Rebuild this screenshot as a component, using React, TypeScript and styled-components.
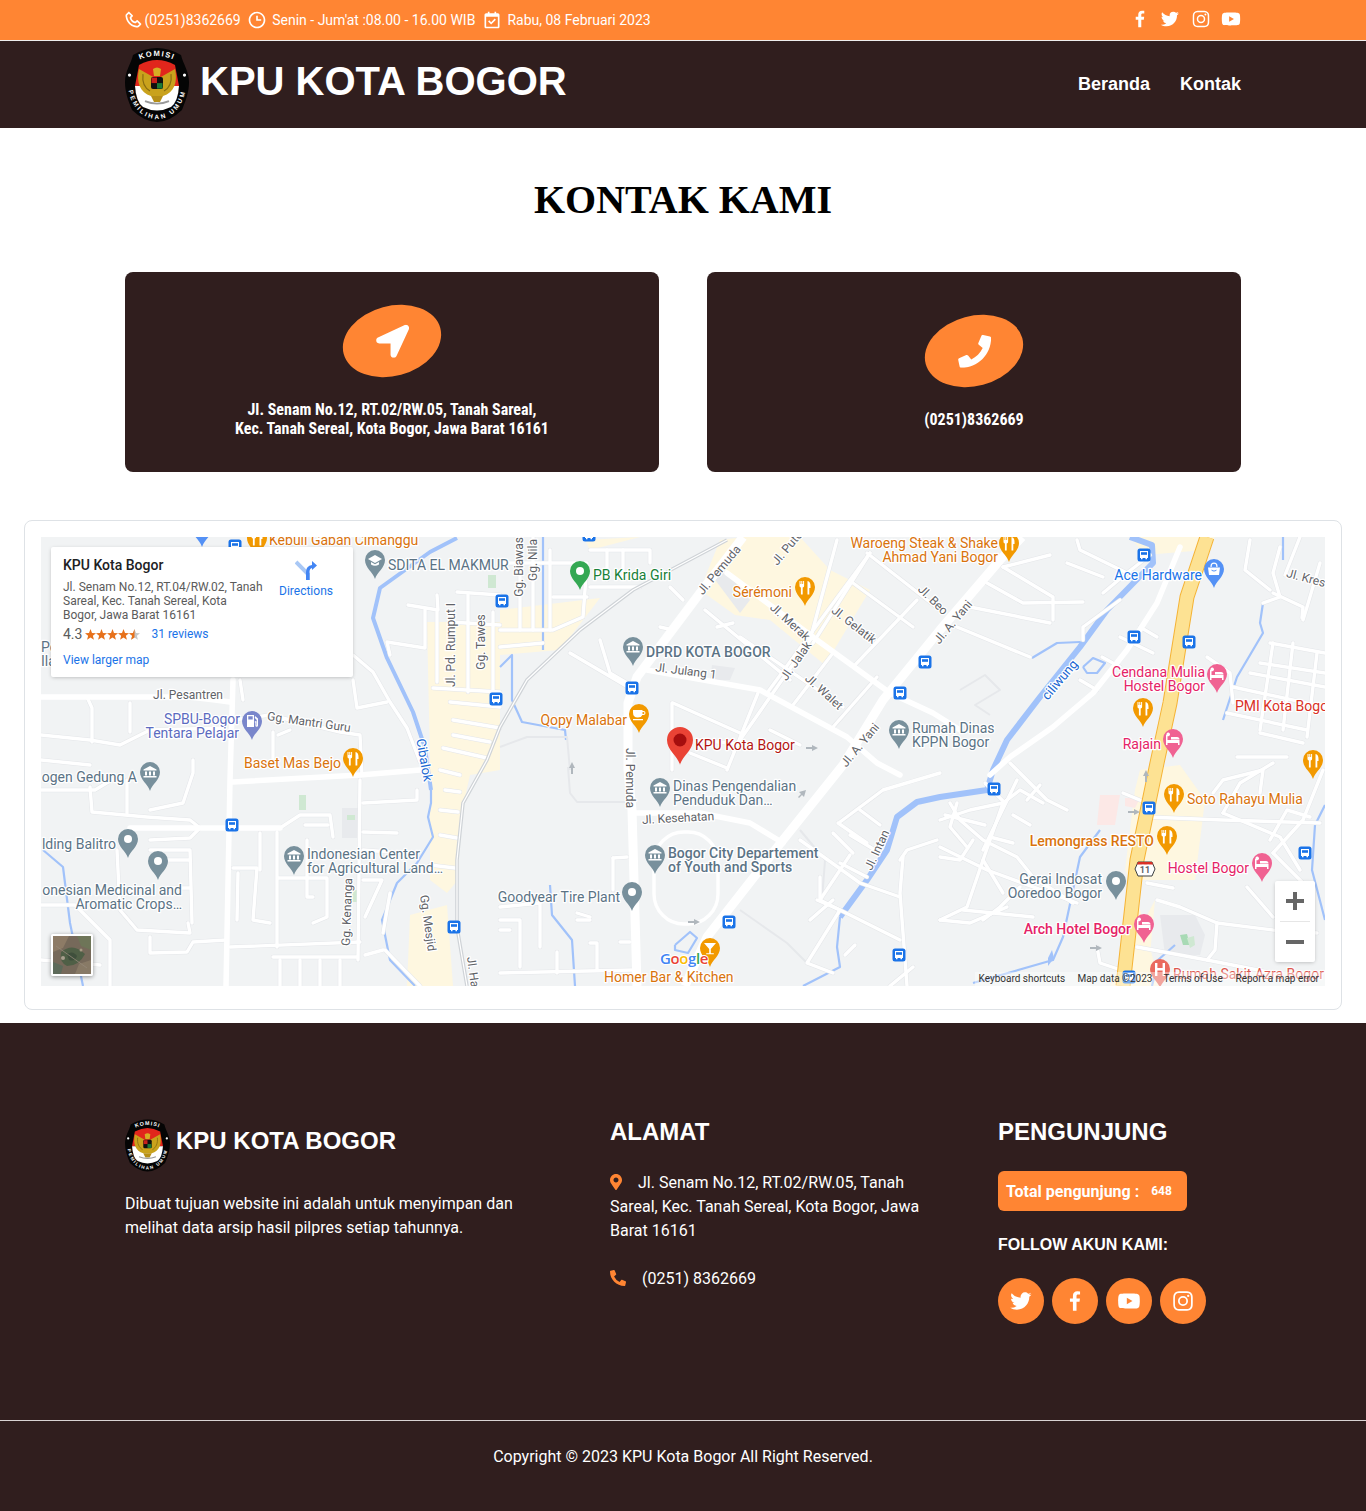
import React from "react";
import styled, { createGlobalStyle } from "styled-components";
import {
  BiPhone, BiTime, BiCalendarCheck, BiLogoFacebook, BiLogoTwitter, BiLogoInstagram, BiLogoYoutube,
} from "react-icons/bi";
import { FaLocationArrow, FaPhone, FaMapMarkerAlt, FaPhoneAlt } from "react-icons/fa";

const ORANGE = "#ff8533";
const DARK = "#301e1e";

const Global = createGlobalStyle`
  html, body { margin: 0; padding: 0; background: #fff; }
  body { font-family: Roboto, "Liberation Sans", Arial, sans-serif; font-size: 16px; color: #000; }
  * { box-sizing: border-box; }
`;

const Page = styled.div`
  min-height: 1511px;
  display: flex;
  flex-direction: column;
`;
const Container = styled.div`
  width: 1116px;
  margin: 0 auto;
`;

/* ---------- top bar ---------- */
const TopBar = styled.div`
  height: 41px;
  background: ${ORANGE};
  border-bottom: 1px solid #eee;
  color: #fff;
`;
const TopInner = styled(Container)`
  height: 40px;
  display: flex;
  align-items: center;
  justify-content: space-between;
`;
const TopInfo = styled.div`
  display: flex;
  align-items: center;
  font-size: 14px;
  margin-left: -2px;
`;
const TopItem = styled.span<{ $gap: number; $end: number }>`
  display: inline-flex;
  align-items: center;
  gap: ${(p) => p.$gap}px;
  margin-right: ${(p) => p.$end}px;
  svg { font-size: 20px; }
`;
const TopSocial = styled.div`
  display: flex;
  align-items: center;
  gap: 8.5px;
  margin: -2px -1px 0 0;
  svg { display: block; font-size: 22px; }
`;

/* ---------- nav ---------- */
const NavBar = styled.header`
  height: 87px;
  background: ${DARK};
  color: #fff;
`;
const NavInner = styled(Container)`
  height: 87px;
  display: flex;
  align-items: center;
  justify-content: space-between;
`;
const Brand = styled.div`
  display: flex;
  align-items: center;
  gap: 11px;
`;
const BrandName = styled.span`
  font-family: "Liberation Sans", Arial, sans-serif;
  font-weight: 700;
  font-size: 40px;
  line-height: 46px;
  padding-bottom: 7px;
`;
const NavLinks = styled.nav`
  display: flex;
  gap: 30px;
`;
const NavLink = styled.a`
  font-family: "Liberation Sans", Arial, sans-serif;
  font-weight: 700;
  font-size: 18px;
  color: #fff;
`;

/* ---------- contact ---------- */
const Title = styled.h1`
  margin: 49px 0 49px;
  text-align: center;
  font-family: "Liberation Serif", "Times New Roman", serif;
  font-weight: 700;
  font-size: 40px;
  line-height: 46px;
`;
const CardGrid = styled(Container)`
  display: grid;
  grid-template-columns: 534px 534px;
  gap: 48px;
`;
const ContactCard = styled.div`
  height: 200px;
  background: ${DARK};
  border-radius: 8px;
  color: #fff;
  display: flex;
  flex-direction: column;
  align-items: center;
  justify-content: center;
  gap: 24px;
`;
const Blob = styled.div`
  width: 100px;
  height: 70px;
  border-radius: 50%;
  background: ${ORANGE};
  transform: rotate(-15deg);
  display: flex;
  align-items: center;
  justify-content: center;
  svg { font-size: 33px; transform: rotate(15deg); }
`;
const CardText = styled.p`
  margin: 0;
  text-align: center;
  font-weight: 700;
  font-size: 16px;
  line-height: 19px;
  font-stretch: 75%;
  white-space: nowrap;
`;

/* ---------- map ---------- */
const MapCard = styled.section`
  margin: 48px 24px 13px;
  height: 490px;
  border: 1px solid #dee2e6;
  border-radius: 8px;
  padding: 16px;
`;
const MapFrame = styled.div`
  position: relative;
  width: 1284px;
  height: 449px;
  overflow: hidden;
  background: #f1f3f4;
`;
const MapSvg = styled.svg`
  display: block;
`;
const TONES: Record<string, string> = {
  poi: "#5b7385",
  food: "#d9730d",
  blue: "#1a73e8",
  pink: "#e52367",
  green: "#188038",
  red: "#b31412",
  purple: "#5c6bc0",
  road: "#5f6368",
  water: "#1967d2",
  pmi: "#d93025",
};
const MapText = styled.text<{ $tone: string; $size?: number; $weight?: number }>`
  font-family: Roboto, "Liberation Sans", sans-serif;
  font-size: ${(p) => p.$size ?? 14}px;
  font-weight: ${(p) => p.$weight ?? 400};
  fill: ${(p) => TONES[p.$tone]};
  stroke: #fff;
  stroke-width: 2.5px;
  stroke-linejoin: round;
  paint-order: stroke;
`;
const GoogleMark = styled.text`
  font-family: "Open Sans", Roboto, sans-serif;
  font-size: 15px;
  font-weight: 600;
  stroke: #fff;
  stroke-width: 2px;
  paint-order: stroke;
  letter-spacing: -0.4px;
`;
const InfoBox = styled.div`
  position: absolute;
  left: 10px;
  top: 10px;
  width: 302px;
  height: 130px;
  background: #fff;
  border-radius: 2px;
  box-shadow: 0 1px 4px -1px rgba(0, 0, 0, 0.3);
  padding: 9px 12px;
  display: grid;
  grid-template-columns: 1fr 74px;
`;
const InfoName = styled.div`
  font-size: 14px;
  font-weight: 500;
  line-height: 18px;
  color: #202124;
`;
const InfoAddress = styled.div`
  margin-top: 6px;
  font-size: 12px;
  line-height: 14px;
  color: #5b5b5b;
  white-space: nowrap;
`;
const InfoRating = styled.div`
  margin-top: 3px;
  display: flex;
  align-items: center;
  font-size: 14px;
  line-height: 18px;
  color: #5b5b5b;
`;
const InfoLink = styled.a<{ $left?: number }>`
  margin-left: ${(p) => p.$left ?? 0}px;
  font-size: 12px;
  color: #1a73e8;
`;
const InfoFoot = styled.div`
  margin-top: 8px;
  line-height: 16px;
`;
const StarRow = styled.svg`
  margin-left: 3px;
`;
const Directions = styled.div`
  display: flex;
  flex-direction: column;
  align-items: center;
  font-size: 12px;
  color: #1a73e8;
  margin: 3px 0 0 4px;
  gap: 3px;
`;
const ZoomControl = styled.div`
  position: absolute;
  right: 10px;
  top: 344px;
  width: 40px;
  height: 81px;
  background: #fff;
  border-radius: 2px;
  box-shadow: 0 1px 4px -1px rgba(0, 0, 0, 0.3);
  display: flex;
  flex-direction: column;
  align-items: center;
`;
const ZoomButton = styled.div`
  width: 40px;
  height: 40px;
  display: flex;
  align-items: center;
  justify-content: center;
`;
const ZoomRule = styled.div`
  width: 30px;
  height: 1px;
  background: #e6e6e6;
`;
const SatThumb = styled.div`
  position: absolute;
  left: 10px;
  top: 397px;
  width: 42px;
  height: 42px;
  border: 2px solid #fff;
  border-radius: 2px;
  box-shadow: 0 1px 4px rgba(0, 0, 0, 0.4);
  overflow: hidden;
  svg { display: block; }
`;
const Attribution = styled.div`
  position: absolute;
  right: 0;
  bottom: 0;
  height: 14px;
  display: flex;
  align-items: center;
  font-size: 10px;
  line-height: 14px;
  color: #333;
  padding: 0 6px 0 4px;
  white-space: nowrap;
  background: rgba(255, 255, 255, 0.4);
`;
const AttrItem = styled.span<{ $width: number }>`
  width: ${(p) => p.$width}px;
`;

/* ---------- footer ---------- */
const Footer = styled.footer`
  flex: 1;
  background: ${DARK};
  color: #fff;
  display: flex;
  flex-direction: column;
`;
const FooterGrid = styled(Container)`
  height: 397px;
  padding-top: 95px;
  display: grid;
  grid-template-columns: 485px 388px 243px;
`;
const FooterBrand = styled.div`
  display: flex;
  align-items: center;
  gap: 6px;
`;
const FooterBrandName = styled.span`
  font-family: "Liberation Sans", Arial, sans-serif;
  font-weight: 700;
  font-size: 24px;
  line-height: 29px;
  padding-bottom: 8px;
`;
const FooterText = styled.p`
  margin: 20px 0 0;
  max-width: 400px;
  line-height: 24px;
`;
const ColTitle = styled.h3`
  margin: -1px 0 25px;
  font-family: "Liberation Sans", Arial, sans-serif;
  font-weight: 700;
  font-size: 24px;
  line-height: 29px;
`;
const AddressBlock = styled.p`
  margin: 0 0 24px;
  max-width: 320px;
  line-height: 24px;
`;
const ContactIcon = styled.span<{ $gap: number }>`
  display: inline-block;
  width: ${(p) => p.$gap}px;
  color: ${ORANGE};
  vertical-align: -2px;
  svg { display: block; font-size: 16px; }
`;
const PinIcon = styled(ContactIcon)`
  svg { margin-left: -2px; }
`;
const VisitorBadge = styled.div`
  width: 189px;
  height: 40px;
  padding-left: 8px;
  border-radius: 6px;
  background: ${ORANGE};
  display: flex;
  align-items: center;
  font-weight: 700;
  font-size: 16px;
`;
const VisitorCount = styled.span`
  margin-left: 12px;
  font-size: 12px;
`;
const FollowTitle = styled.h4`
  margin: 25px 0 24px;
  font-family: "Liberation Sans", Arial, sans-serif;
  font-weight: 700;
  font-size: 16px;
  line-height: 18px;
`;
const SocialRow = styled.div`
  display: flex;
  gap: 8px;
`;
const SocialCircle = styled.a`
  width: 46px;
  height: 46px;
  border-radius: 50%;
  background: ${ORANGE};
  color: #fff;
  display: flex;
  align-items: center;
  justify-content: center;
  svg { font-size: 26px; }
`;
const CopyBar = styled.div`
  flex: 1;
  border-top: 1px solid #d9d3d3;
  padding-top: 24px;
  text-align: center;
  line-height: 24px;
`;

/* ---------- logo ---------- */
function Logo({ width, pathId }: { width: number; pathId: string }) {
  return (
    <svg width={width} height={width * 1.19} viewBox="0 0 64 76">
      <path
        d="M8 9 Q32 -5 56 9 C58 18 64 25 64 36 C64 46 61 54 57 64 Q32 88 7 64 C3 54 0 46 0 36 C0 25 6 18 8 9Z"
        fill="#050505"
      />
      <path d="M14 19 Q32 9 50 19 L54 40 L10 40Z" fill="#e1261c" />
      <path d="M10 40 L54 40 Q53 56 46 61 Q32 68 18 61 Q11 56 10 40Z" fill="#fff" />
      <path d="M30 32 L14 23 C11 36 15 47 26 50 L38 50 C49 47 53 36 50 23 L34 32Z" fill="#c9a21c" />
      <path d="M18 28 C17 36 20 42 25 45 M46 28 C47 36 44 42 39 45" stroke="#8a6d10" strokeWidth="1.2" fill="none" />
      <path d="M26 50 L38 50 L35 56 L29 56Z" fill="#b68f17" />
      <path d="M28 23 Q32 20 36 23 L35 30 L29 30Z" fill="#d7ae23" />
      <rect x="26" y="31" width="12" height="12" rx="2" fill="#101010" />
      <rect x="26.5" y="31.5" width="5.5" height="5.5" fill="#c8201a" />
      <rect x="32" y="37" width="5.5" height="5.5" fill="#1c7a36" />
      <path d="M20 55 Q32 60 44 55" stroke="#999" strokeWidth="1.8" fill="none" />
      <circle cx="4.5" cy="29" r="1.6" fill="#fff" />
      <circle cx="59.5" cy="29" r="1.6" fill="#fff" />
      <defs>
        <path id={`${pathId}-top`} d="M10 16 Q32 4 54 16" />
        <path id={`${pathId}-bottom`} d="M3 36 C3 58 16 73 32 73 C48 73 61 58 61 36" />
      </defs>
      <text fontFamily="Liberation Sans, sans-serif" fontWeight="700" fontSize="7.6" fill="#fff" letterSpacing="1.4">
        <textPath href={`#${pathId}-top`} startOffset="50%" textAnchor="middle">KOMISI</textPath>
      </text>
      <text fontFamily="Liberation Sans, sans-serif" fontWeight="700" fontSize="6.4" fill="#fff" letterSpacing="2.2">
        <textPath href={`#${pathId}-bottom`} startOffset="50%" textAnchor="middle">PEMILIHAN UMUM</textPath>
      </text>
    </svg>
  );
}

/* ---------- map data (page coordinates) ---------- */
const ROADS_BIG = [
  "743,537 700,593 637,677 628,703 628,770 632,810 637,986",
  "1022,537 1000,560 940,630 883,700 843,765 783,840 707,937 685,986",
];
const ROADS_MID = [
  "233,680 230,780 226,986",
  "41,697 190,697 215,700 230,702",
  "233,782 360,775 420,770",
  "633,813 700,813 750,823 783,843",
  "647,670 760,690 847,737 877,763 900,775",
  "727,573 817,640 890,693 933,713 960,730",
  "1180,547 1157,603 1127,650 1093,693 1053,727 1010,757 990,775",
  "130,828 280,828",
];
const ROADS_SMALL = [
  "353,655 373,672 390,702 407,728 420,762",
  "90,787 92,812 147,817 190,820 200,828 190,838 150,840",
  "150,810 183,803 193,773 193,760",
  "127,780 127,813",
  "200,828 228,828",
  "117,850 120,910 137,930 190,933 188,923",
  "150,850 190,850 192,923",
  "150,937 150,953 187,952 193,942 226,940",
  "167,860 190,860", "170,888 190,888",
  "41,905 75,905 110,940 110,986", "41,960 100,965",
  "87,697 92,708 92,742", "41,735 90,740 120,745 150,730 225,728",
  "130,703 130,732", "270,715 340,732 360,735 362,775",
  "273,732 273,760", "278,735 290,730", "353,680 357,708 387,702", "233,720 270,715",
  "240,680 243,700", "120,775 95,790 41,790", "41,760 90,765",
  "233,868 257,868 253,920 270,923", "238,873 237,920",
  "260,833 260,870", "277,832 277,947",
  "278,878 327,878 327,917 313,923", "307,840 307,897 313,897",
  "280,828 300,815 330,815 333,837", "305,825 328,825",
  "230,947 360,942", "273,957 357,957", "280,960 280,986", "320,960 320,986", "340,960 340,986", "300,960 300,986",
  "360,780 358,960", "363,803 417,800 417,790", "363,832 397,833", "363,850 390,852", "363,880 382,880 365,917",
  "383,933 390,893", "385,950 420,986", "365,955 383,950",
  "408,605 438,610 437,595", "425,610 425,648 387,642 390,655", "437,612 437,682",
  "457,592 500,595", "468,595 468,692", "493,612 493,695", "450,622 500,625", "433,688 500,692",
  "450,702 500,707", "453,720 500,728", "453,735 490,742", "443,748 487,758", "440,770 460,775", "445,790 460,792",
  "440,810 458,812", "440,835 457,838", "430,865 455,868",
  "500,563 587,563 583,617 553,630 500,630", "553,597 587,597", "550,550 550,630",
  "520,537 520,630", "533,537 533,630", "500,647 543,643",
  "590,550 650,550 650,563", "607,550 607,580", "623,550 623,577", "590,587 640,587",
  "570,653 633,690", "600,640 610,673 627,683", "670,587 683,600", "660,627 673,630",
  "673,703 740,733", "672,703 672,770", "690,753 727,768", "727,770 758,693",
  "793,705 833,653", "833,727 877,677", "853,583 913,627", "853,667 917,600", "813,643 870,553",
  "867,553 940,610", "810,640 837,540", "733,750 810,640", "740,637 843,707", "767,693 870,553",
  "717,627 733,623", "705,610 790,680", "770,730 800,745", "700,740 745,745",
  "987,583 1023,603 1083,602", "1003,567 1050,555", "1003,567 1053,597 1053,620", "970,607 1050,623",
  "957,627 1030,657", "1077,540 1080,550 1127,573", "1067,563 1103,577", "1103,593 1127,573 1150,555",
  "1083,640 1083,627 1120,600", "1120,637 1153,653", "1140,627 1157,637", "1102,657 1120,667", "1080,680 1097,690",
  "1280,547 1273,573 1280,597 1263,603", "1300,537 1285,575", "1250,540 1245,570 1270,590",
  "1273,593 1303,607 1302,618", "1303,620 1307,607 1320,563",
  "1207,657 1230,673 1233,703",
  "1273,643 1260,730", "1293,643 1283,730", "1317,653 1307,737", "1270,643 1325,653", "1260,663 1325,673",
  "1250,673 1325,687", "1233,687 1325,707", "1227,713 1307,730", "1260,733 1303,743", "1237,757 1287,757",
  "1010,763 1047,800 1067,810", "940,847 987,870 1077,903", "957,803 950,827 967,847", "1003,803 983,860 1003,893",
  "963,910 1033,917", "940,920 970,923 1007,907", "1017,780 983,850", "1123,793 1147,803",
  "940,820 970,810 1003,803", "950,803 960,820 983,840 1017,857 1033,877 1073,903",
  "973,840 960,860 940,857", "990,837 1013,843", "1003,803 1020,790 1043,803",
  "983,860 967,907 940,920", "1020,887 1000,907 983,920",
  "1147,817 1223,820 1320,823", "1223,813 1240,783 1273,763", "1323,770 1303,820 1273,853",
  "1223,813 1280,837 1300,870", "1270,840 1287,810 1310,817", "1213,793 1223,780 1263,770 1260,793",
  "1157,900 1180,907 1217,923 1273,930 1317,933", "1147,883 1173,888", "1137,947 1207,960 1273,973",
  "1217,923 1215,950 1207,960", "1097,947 1100,963 1130,973", "1247,887 1273,917", "1273,853 1310,890",
  "820,877 820,900 900,940", "838,823 867,843", "840,822 883,790 940,773", "860,810 880,825", "850,835 875,850",
  "833,833 853,853", "840,863 867,877", "820,900 850,855", "810,920 833,900",
  "800,840 860,883 900,897", "817,900 840,910 807,963 833,973", "900,860 907,850 937,840", "903,857 900,893 907,986",
  "890,986 913,967", "845,955 855,945", "500,920 520,920 520,967", "500,973 633,970", "590,943 597,943 597,970",
  "557,952 557,973", "540,903 540,947", "577,913 590,917", "577,920 590,920", "500,907 540,903",
  "613,858 627,857", "613,858 613,890", "620,942 630,942", "510,930 500,930",
  "985,783 1005,803", "1027,800 1040,785", "945,815 985,825", "1013,815 1030,825",
];
const ROADS_FAINT = [
  "568,767 570,793 577,802 627,802",
  "500,747 527,737 567,737 570,770",
  "740,910 787,943 807,963",
  "822,900 825,860 800,830",
  "960,690 985,675 1000,690 975,705 990,715",
];
const BEIGE = [
  "427,622 500,622 500,770 470,775 460,820 458,880 447,893 430,880 430,760",
  "407,986 410,915 447,905 453,986",
  "500,610 600,598 560,650 500,655",
  "700,590 720,540 745,537 800,537 830,570 870,590 825,665 770,620 735,615",
  "1130,537 1215,537 1205,550 1145,555",
  "1140,770 1180,765 1205,800 1195,880 1135,880 1120,955 1150,955 1155,900 1110,986 1160,986 1135,890 1125,870 1135,790",
  "640,537 590,550 585,540",
];
const BLOCKS = [
  { pts: "713,577 725,570 750,600 740,613", fill: "#e8eaed" },
  { pts: "712,665 735,668 730,680 710,680", fill: "#e8eaed" },
  { pts: "1160,915 1195,915 1205,935 1200,955 1165,955", fill: "#e8eaed" },
  { pts: "342,808 360,808 360,838 342,838", fill: "#e8eaed" },
  { pts: "1100,795 1120,795 1115,825 1097,825", fill: "#fce8e6" },
  { pts: "1125,798 1140,798 1135,808 1125,806", fill: "#fce8e6" },
  { pts: "299,795 306,795 306,810 299,810", fill: "#cfe8d2" },
  { pts: "347,815 355,815 355,820 347,820", fill: "#cfe8d2" },
  { pts: "352,890 358,890 358,902 352,902", fill: "#cfe8d2" },
  { pts: "1180,935 1187,934 1190,945 1183,945", fill: "#a8dab5" },
  { pts: "1187,938 1194,936 1195,945 1190,948", fill: "#cfe8d2" },
  { pts: "488,575 496,575 496,588 488,588", fill: "#cfe8d2" },
];
const RIVER_MAIN = "1130,537 1152,545 1153,563 1107,610 1080,647 1040,697 1007,740 993,770 987,790 940,797 917,802 897,817 887,850 867,880 840,917";
const RIVER_WEST = "457,538 430,552 380,588 373,618 387,658 413,712 425,748 431,790";
const RIVERS_THIN = [
  "431,790 431,803 428,817 433,837 417,863 397,883 382,920 390,960 415,986",
  "840,917 837,947 840,967 803,986",
  "43,850 63,867 70,923 83,986",
  "1263,603 1260,623 1263,633 1237,677 1223,720",
  "1100,830 1080,857 1063,937 1053,960 973,983",
  "1032,658 1057,643 1080,642",
  "1083,667 1093,658 1105,663 1097,673 1087,673 1083,667",
  "543,537 543,650",
  "500,667 512,655 512,700 522,722 565,730 566,740",
  "550,885 552,915 572,940 575,986",
  "1283,537 1283,560",
  "1325,805 1315,825 1312,870 1325,920",
  "675,945 690,932 697,938 688,953 675,950 675,945",
  "1152,986 1158,960 1175,945",
];

type Pin = { x: number; y: number; c: string; g: string; s?: number };
const PIN_COLORS: Record<string, string> = {
  poi: "#78909c", food: "#f29900", blue: "#5491f5", pink: "#f06292", green: "#34a853", red: "#ea4335", purple: "#7986cb", hosp: "#ea6a5e",
};
const PINS: Pin[] = [
  { x: 375, y: 560, c: "poi", g: "cap" }, { x: 580, y: 571, c: "green", g: "dot" },
  { x: 805, y: 587, c: "food", g: "food" }, { x: 1009, y: 543, c: "food", g: "food" },
  { x: 1214, y: 569, c: "blue", g: "bag" }, { x: 633, y: 647, c: "poi", g: "bank" },
  { x: 639, y: 714, c: "food", g: "cup" }, { x: 899, y: 730, c: "poi", g: "bank" },
  { x: 1217, y: 674, c: "pink", g: "bed" }, { x: 1143, y: 708, c: "food", g: "food" },
  { x: 1173, y: 739, c: "pink", g: "bed" }, { x: 1313, y: 760, c: "food", g: "food" },
  { x: 1174, y: 794, c: "food", g: "food" }, { x: 1167, y: 836, c: "food", g: "food" },
  { x: 1262, y: 863, c: "pink", g: "bed" }, { x: 1116, y: 881, c: "poi", g: "dot" },
  { x: 1144, y: 924, c: "pink", g: "bed" }, { x: 1160, y: 969, c: "hosp", g: "hosp" },
  { x: 660, y: 788, c: "poi", g: "bank" }, { x: 655, y: 855, c: "poi", g: "bank" },
  { x: 632, y: 892, c: "poi", g: "dot" }, { x: 710, y: 948, c: "food", g: "bar" },
  { x: 252, y: 721, c: "purple", g: "fuel" }, { x: 353, y: 758, c: "food", g: "food" },
  { x: 150, y: 772, c: "poi", g: "bank" }, { x: 128, y: 839, c: "poi", g: "dot" },
  { x: 158, y: 861, c: "poi", g: "dot" }, { x: 294, y: 856, c: "poi", g: "bank" },
  { x: 257, y: 538, c: "food", g: "food" }, { x: 202, y: 528, c: "blue", g: "bag" },
  { x: 680, y: 740, c: "red", g: "spot", s: 1.3 },
];
const BUSES = [
  [502, 601], [496, 699], [632, 688], [232, 825], [454, 927], [729, 922], [899, 955], [925, 662], [900, 693],
  [1144, 555], [1134, 637], [1189, 642], [994, 789], [1149, 808], [1305, 853], [589, 535], [235, 546], [1129, 977],
];
type Lbl = { t: string; x: number; y: number; tone: string; a?: "end" | "middle"; r?: number; size?: number; w?: number; o?: number };
const LABELS: Lbl[] = [
  { t: "Kebuli Gaban Cimanggu", x: 269, y: 540, tone: "food" },
  { t: "SDITA EL MAKMUR", x: 388, y: 565, tone: "poi" },
  { t: "PB Krida Giri", x: 593, y: 575, tone: "green" },
  { t: "Waroeng Steak & Shake", x: 998, y: 543, tone: "food", a: "end" },
  { t: "Ahmad Yani Bogor", x: 998, y: 557, tone: "food", a: "end" },
  { t: "Ace Hardware", x: 1202, y: 575, tone: "blue", a: "end" },
  { t: "Sérémoni", x: 792, y: 592, tone: "food", a: "end" },
  { t: "DPRD KOTA BOGOR", x: 646, y: 652, tone: "poi", w: 500 },
  { t: "SPBU-Bogor", x: 240, y: 719, tone: "purple", a: "end" },
  { t: "Tentara Pelajar", x: 239, y: 733, tone: "purple", a: "end" },
  { t: "Baset Mas Bejo", x: 341, y: 763, tone: "food", a: "end" },
  { t: "Qopy Malabar", x: 627, y: 720, tone: "food", a: "end" },
  { t: "KPU Kota Bogor", x: 695, y: 745, tone: "red" },
  { t: "ogen Gedung A", x: 137, y: 777, tone: "poi", a: "end" },
  { t: "Dinas Pengendalian", x: 673, y: 786, tone: "poi" },
  { t: "Penduduk Dan…", x: 673, y: 800, tone: "poi" },
  { t: "Rumah Dinas", x: 912, y: 728, tone: "poi" },
  { t: "KPPN Bogor", x: 912, y: 742, tone: "poi" },
  { t: "Cendana Mulia", x: 1205, y: 672, tone: "pink", a: "end" },
  { t: "Hostel Bogor", x: 1205, y: 686, tone: "pink", a: "end" },
  { t: "PMI Kota Bogor", x: 1235, y: 706, tone: "pmi" },
  { t: "Rajain", x: 1161, y: 744, tone: "pink", a: "end" },
  { t: "Soto Rahayu Mulia", x: 1187, y: 799, tone: "food" },
  { t: "Lemongrass RESTO", x: 1154, y: 841, tone: "food", a: "end", w: 500 },
  { t: "Hostel Bogor", x: 1249, y: 868, tone: "pink", a: "end" },
  { t: "Gerai Indosat", x: 1102, y: 879, tone: "poi", a: "end" },
  { t: "Ooredoo Bogor", x: 1102, y: 893, tone: "poi", a: "end" },
  { t: "Arch Hotel Bogor", x: 1131, y: 929, tone: "pink", a: "end", w: 500 },
  { t: "Rumah Sakit Azra Bogor", x: 1173, y: 974, tone: "pmi", o: 0.8 },
  { t: "lding Balitro", x: 116, y: 844, tone: "poi", a: "end" },
  { t: "onesian Medicinal and", x: 182, y: 890, tone: "poi", a: "end" },
  { t: "Aromatic Crops…", x: 182, y: 904, tone: "poi", a: "end" },
  { t: "Indonesian Center", x: 307, y: 854, tone: "poi" },
  { t: "for Agricultural Land…", x: 307, y: 868, tone: "poi" },
  { t: "Goodyear Tire Plant", x: 620, y: 897, tone: "poi", a: "end" },
  { t: "Bogor City Departement", x: 668, y: 853, tone: "poi", w: 500 },
  { t: "of Youth and Sports", x: 668, y: 867, tone: "poi", w: 500 },
  { t: "Homer Bar & Kitchen", x: 604, y: 977, tone: "food" },
  { t: "Pe", x: 41, y: 647, tone: "poi" },
  { t: "Ila", x: 41, y: 661, tone: "poi" },
  { t: "Jl. Pesantren", x: 188, y: 695, tone: "road", a: "middle", size: 12 },
  { t: "Gg. Mantri Guru", x: 309, y: 722, tone: "road", a: "middle", size: 12, r: 8 },
  { t: "Gg. Biawas", x: 519, y: 567, tone: "road", a: "middle", size: 12, r: -90 },
  { t: "Gg. Nila", x: 533, y: 560, tone: "road", a: "middle", size: 12, r: -90 },
  { t: "Jl. Pemuda", x: 719, y: 570, tone: "road", a: "middle", size: 12, r: -50 },
  { t: "Jl. Pute", x: 787, y: 548, tone: "road", a: "middle", size: 12, r: -50 },
  { t: "Jl. Kres", x: 1306, y: 578, tone: "road", a: "middle", size: 12, r: 15 },
  { t: "Jl. Merak", x: 790, y: 622, tone: "road", a: "middle", size: 12, r: 42 },
  { t: "Jl. Gelatik", x: 854, y: 625, tone: "road", a: "middle", size: 12, r: 38 },
  { t: "Jl. Beo", x: 933, y: 600, tone: "road", a: "middle", size: 12, r: 45 },
  { t: "Jl. A. Yani", x: 953, y: 622, tone: "road", a: "middle", size: 12, r: -50 },
  { t: "Jl. Jalak", x: 796, y: 661, tone: "road", a: "middle", size: 12, r: -55 },
  { t: "Jl. Walet", x: 824, y: 692, tone: "road", a: "middle", size: 12, r: 42 },
  { t: "Jl. Julang 1", x: 686, y: 671, tone: "road", a: "middle", size: 12, r: 7 },
  { t: "Jl. Pemuda", x: 630, y: 778, tone: "road", a: "middle", size: 12, r: 90 },
  { t: "Jl. Kesehatan", x: 678, y: 818, tone: "road", a: "middle", size: 12, r: -3 },
  { t: "Jl. Intan", x: 877, y: 850, tone: "road", a: "middle", size: 12, r: -65 },
  { t: "Jl. A. Yani", x: 860, y: 745, tone: "road", a: "middle", size: 12, r: -50 },
  { t: "Jl. Pd. Rumput I", x: 451, y: 645, tone: "road", a: "middle", size: 12, r: -90 },
  { t: "Gg. Tawes", x: 481, y: 642, tone: "road", a: "middle", size: 12, r: -90 },
  { t: "Gg. Kenanga", x: 347, y: 912, tone: "road", a: "middle", size: 12, r: -88 },
  { t: "Gg. Mesjid", x: 428, y: 923, tone: "road", a: "middle", size: 12, r: 82 },
  { t: "Jl. Ha", x: 473, y: 972, tone: "road", a: "middle", size: 12, r: 82 },
  { t: "Cibalok", x: 424, y: 760, tone: "water", a: "middle", size: 13, r: 80 },
  { t: "ciliwung", x: 1060, y: 680, tone: "water", a: "middle", size: 13, r: -50 },
];

function Glyph({ g }: { g: string }) {
  switch (g) {
    case "dot":
      return <circle r="4" fill="#fff" />;
    case "spot":
      return <circle r="5" fill="#a50e0e" />;
    case "bank":
      return <path d="M-6.5 -2.5 L0 -6 L6.5 -2.5 L6.5 -1.5 L-6.5 -1.5Z M-5 -.5 h2 v4 h-2Z M-1 -.5 h2 v4 h-2Z M3 -.5 h2 v4 h-2Z M-6.5 4 h13 v1.5 h-13Z" fill="#fff" />;
    case "cap":
      return <path d="M-7 -1 L0 -5 L7 -1 L0 3Z M-4 2 L0 4.3 L4 2 L4 4.5 Q0 7 -4 4.5Z" fill="#fff" />;
    case "food":
      return <path d="M-5.5 -6 h1 v3 h.8 v-3 h1 v3 h.8 v-3 h1 v5 q0 1.2 -1.4 1.4 v7 h-1.8 v-7 q-1.4 -.2 -1.4 -1.4Z M2.5 -6 q3 .6 3 5 v2 h-1.2 v6.5 h-1.8Z" fill="#fff" />;
    case "bed":
      return <path d="M-7 -4 h1.5 v5 h12 v5 h-1.5 v-2 h-10.5 v2 h-1.5Z M-4.8 -2.8 a1.8 1.8 0 1 1 .01 0Z M-2 -2 h6 q2.5 0 2.5 2.5 h-8.5Z" fill="#fff" />;
    case "cup":
      return <path d="M-6 -4 h9.5 v1 h1 q2 0 2 2 q0 2 -2 2 h-1.2 q-1 2.5 -4.5 2.5 q-4.8 0 -4.8 -5Z M3.5 -2 v2 h1 q.9 0 .9 -1 t-.9 -1Z M-6 5 h10 v1.2 h-10Z" fill="#fff" />;
    case "bar":
      return <path d="M-6 -5 h12 l-5.2 6 v4.2 h3 v1 h-7.6 v-1 h3 v-4.2Z" fill="#fff" />;
    case "bag":
      return <path d="M-6 -1.5 h12 l-1 7.5 h-10Z M-3.5 -2 v-1 a3.5 3.5 0 0 1 7 0 v1 h-1.2 v-1 a2.3 2.3 0 0 0 -4.6 0 v1Z M-2.5 1.5 q2.5 2.2 5 0 v-1 q-2.5 2 -5 0Z" fill="#fff" fillRule="evenodd" />;
    case "fuel":
      return <path d="M-5 -6 h7 v12 h-7Z M-3.7 -4.7 v3.2 h4.4 v-3.2Z M3 -5 l3 2.5 v7 a1.3 1.3 0 0 1 -2.6 0 v-3 h-.6 v-1.2 h1.6 v4.2 h.4 v-5.5 l-2 -2Z" fill="#fff" fillRule="evenodd" />;
    case "hosp":
      return <path d="M-5 -6 h2.4 v5 h5.2 v-5 h2.4 v13 h-2.4 v-5.5 h-5.2 v5.5 h-2.4Z" fill="#fff" />;
    default:
      return null;
  }
}

function MapDrawing() {
  return (
    <MapSvg width="1284" height="449" viewBox="41 537 1284 449">
      <rect x="41" y="537" width="1284" height="449" fill="#f1f3f4" />
      {BEIGE.map((p) => <polygon key={p} points={p} fill="#fef7e0" />)}
      {BLOCKS.map((b) => <polygon key={b.pts} points={b.pts} fill={b.fill} />)}
      <polyline points={RIVER_MAIN} fill="none" stroke="#a1c2fa" strokeWidth="6" strokeLinejoin="round" />
      <polyline points={RIVER_WEST} fill="none" stroke="#a1c2fa" strokeWidth="4" strokeLinejoin="round" />
      {RIVERS_THIN.map((p) => <polyline key={p} points={p} fill="none" stroke="#a1c2fa" strokeWidth="2.2" strokeLinejoin="round" />)}
      <polygon points="1048,958 1052,950 1054,958 1048,966" fill="#a1c2fa" />
      {ROADS_FAINT.map((p) => <polyline key={p} points={p} fill="none" stroke="#e6e8eb" strokeWidth="2" strokeLinejoin="round" />)}
      {ROADS_SMALL.map((p) => <polyline key={`c-${p}`} points={p} fill="none" stroke="#e4e6e9" strokeWidth="4.4" strokeLinejoin="round" strokeLinecap="round" />)}
      {ROADS_SMALL.map((p) => <polyline key={p} points={p} fill="none" stroke="#fff" strokeWidth="3.4" strokeLinejoin="round" strokeLinecap="round" />)}
      <polyline points="727,540 633,590 580,630 527,680 500,727 487,760 463,803 457,860 457,927 467,986" fill="none" stroke="#cfd3d7" strokeWidth="3.6" />
      <polyline points="727,540 633,590 580,630 527,680 500,727 487,760 463,803 457,860 457,927 467,986" fill="none" stroke="#fff" strokeWidth="1.2" />
      {ROADS_MID.map((p) => <polyline key={p} points={p} fill="none" stroke="#fff" strokeWidth="5.5" strokeLinejoin="round" strokeLinecap="round" />)}
      {ROADS_BIG.map((p) => <polyline key={p} points={p} fill="none" stroke="#fff" strokeWidth="9" strokeLinejoin="round" />)}
      <rect x="654" y="832" width="64" height="92" rx="30" fill="none" stroke="#fff" strokeWidth="3.4" />
      <polyline points="1207,537 1187,597 1170,703 1157,763 1137,860 1123,986" fill="none" stroke="#f5b335" strokeWidth="15" />
      <polyline points="1207,537 1187,597 1170,703 1157,763 1137,860 1123,986" fill="none" stroke="#fde293" strokeWidth="13" />
      <g fill="#b0b7bd">
        <path d="M572 762 l3 6 h-2 v6 h-2 v-6 h-2Z" />
        <path d="M1140 812 l-6 3 v-2 h-6 v-2 h6 v-2Z" />
        <path d="M1102 948 l-6 3 v-2 h-6 v-2 h6 v-2Z" />
        <path d="M818 748 l-6 3 v-2 h-6 v-2 h6 v-2Z" />
        <path d="M806 790 l-2 7 -2 -2 -3 3 -1 -1 3 -3 -2 -2Z" />
        <path d="M700 922 l-6 3 v-2 h-6 v-2 h6 v-2Z" />
        <path d="M1146 770 l3 6 h-2 v6 h-2 v-6 h-2Z" />
      </g>
      {BUSES.map(([x, y]) => (
        <g key={`${x}-${y}`} transform={`translate(${x} ${y})`}>
          <rect x="-6.5" y="-6.5" width="13" height="13" rx="2.5" fill="#1a73e8" />
          <path d="M-4 -4 h8 v7 h-1 v1.3 h-1.5 v-1.3 h-3 v1.3 h-1.5 v-1.3 h-1Z" fill="#fff" />
          <rect x="-3" y="-2.8" width="6" height="2.6" fill="#1a73e8" />
        </g>
      ))}
      {LABELS.map((l, i) => (
        <MapText
          key={i}
          $tone={l.tone}
          $size={l.size}
          $weight={l.w}
          x={l.x}
          y={l.y + (l.size ? 4 : 5)}
          textAnchor={l.a ?? "start"}
          opacity={l.o}
          transform={l.r ? `rotate(${l.r} ${l.x} ${l.y})` : undefined}
        >
          {l.t}
        </MapText>
      ))}
      {PINS.map((p, i) => (
        <g key={i} transform={`translate(${p.x} ${p.y}) scale(${p.s ?? 1})`}>
          <path d="M0 19 C-2 12 -10 8 -10 0 A10 10 0 1 1 10 0 C10 8 2 12 0 19Z" fill={PIN_COLORS[p.c]} />
          <Glyph g={p.g} />
        </g>
      ))}
      <g transform="translate(1145 869)">
        <path d="M-7 -7 H7 L10 0 L7 7 H-7 L-10 0Z" fill="#fff" stroke="#3c4043" strokeWidth="1" />
        <path d="M-7 -7 H7 L8 -4.5 H-8Z" fill="#d93025" />
        <MapText $tone="road" $size={9} $weight={700} x={0} y={4} textAnchor="middle">11</MapText>
      </g>
      <GoogleMark x="660" y="964">
        <tspan fill="#4285f4">G</tspan>
        <tspan fill="#ea4335">o</tspan>
        <tspan fill="#fbbc04">o</tspan>
        <tspan fill="#4285f4">g</tspan>
        <tspan fill="#34a853">l</tspan>
        <tspan fill="#ea4335">e</tspan>
      </GoogleMark>
    </MapSvg>
  );
}

function Stars() {
  const star = "M5.5 0 L7 3.9 L11 4.2 L7.9 6.8 L8.9 10.8 L5.5 8.6 L2.1 10.8 L3.1 6.8 L0 4.2 L4 3.9Z";
  return (
    <StarRow width="56" height="11" viewBox="0 0 56 11">
      {[0, 1, 2, 3].map((i) => <path key={i} d={star} fill="#e7711b" transform={`translate(${i * 11} 0)`} />)}
      <path d={star} fill="#c7c7c7" transform="translate(44 0)" />
      <path d="M5.5 0 L4 3.9 L0 4.2 L3.1 6.8 L2.1 10.8 L5.5 8.6Z" fill="#e7711b" transform="translate(44 0)" />
    </StarRow>
  );
}

function Satellite() {
  return (
    <svg width="38" height="38" viewBox="0 0 38 38">
      <rect width="38" height="38" fill="#76695a" />
      <path d="M0 0 H16 L10 12 L0 16Z" fill="#8d7b66" />
      <path d="M24 0 H38 V14 L28 10Z" fill="#6e7558" />
      <path d="M8 16 Q20 6 32 18 Q26 30 14 30 Q6 26 8 16Z" fill="#4f5f46" />
      <path d="M14 18 q6 -4 10 2 q-2 6 -8 4Z" fill="#3f4f3c" />
      <path d="M0 26 L10 30 L8 38 H0Z" fill="#5d6a5a" />
      <path d="M26 28 L38 24 V38 H22Z" fill="#887a66" />
      <circle cx="10" cy="22" r="2" fill="#a89f8e" />
      <circle cx="28" cy="14" r="1.5" fill="#a59a84" />
      <path d="M3 10 L34 32" stroke="#95897a" strokeWidth="0.8" />
    </svg>
  );
}

export default function App() {
  return (
    <Page>
      <Global />
      <TopBar>
        <TopInner>
          <TopInfo>
            <TopItem $gap={1.5} $end={6}><BiPhone />(0251)8362669</TopItem>
            <TopItem $gap={5.5} $end={6.5}><BiTime />Senin - Jum'at :08.00 - 16.00 WIB</TopItem>
            <TopItem $gap={5.5} $end={0}><BiCalendarCheck />Rabu, 08 Februari 2023</TopItem>
          </TopInfo>
          <TopSocial>
            <BiLogoFacebook /><BiLogoTwitter /><BiLogoInstagram /><BiLogoYoutube />
          </TopSocial>
        </TopInner>
      </TopBar>
      <NavBar>
        <NavInner>
          <Brand>
            <Logo width={64} pathId="nav-logo" />
            <BrandName>KPU KOTA BOGOR</BrandName>
          </Brand>
          <NavLinks>
            <NavLink>Beranda</NavLink>
            <NavLink>Kontak</NavLink>
          </NavLinks>
        </NavInner>
      </NavBar>

      <main>
        <Title>KONTAK KAMI</Title>
        <CardGrid>
          <ContactCard>
            <Blob><FaLocationArrow /></Blob>
            <CardText>
              Jl. Senam No.12, RT.02/RW.05, Tanah Sareal,
              <br />
              Kec. Tanah Sereal, Kota Bogor, Jawa Barat 16161
            </CardText>
          </ContactCard>
          <ContactCard>
            <Blob><FaPhone /></Blob>
            <CardText>(0251)8362669</CardText>
          </ContactCard>
        </CardGrid>
        <MapCard>
          <MapFrame>
            <MapDrawing />
            <InfoBox>
              <div>
                <InfoName>KPU Kota Bogor</InfoName>
                <InfoAddress>
                  Jl. Senam No.12, RT.04/RW.02, Tanah
                  <br />
                  Sareal, Kec. Tanah Sereal, Kota
                  <br />
                  Bogor, Jawa Barat 16161
                </InfoAddress>
                <InfoRating>
                  4.3
                  <Stars />
                  <InfoLink $left={10}>31 reviews</InfoLink>
                </InfoRating>
                <InfoFoot><InfoLink>View larger map</InfoLink></InfoFoot>
              </div>
              <Directions>
                <svg width="22" height="22" viewBox="0 0 22 22">
                  <path d="M1 3 L13 15 V21" fill="none" stroke="#a9c8f5" strokeWidth="4" />
                  <path d="M11 21 V13 Q11 7 17 6 V2 L22 6.5 L17 11 V9 Q14.5 9.5 14.5 13 V21Z" fill="#4285f4" />
                </svg>
                Directions
              </Directions>
            </InfoBox>
            <ZoomControl>
              <ZoomButton>
                <svg width="18" height="18" viewBox="0 0 18 18"><path d="M18 7h-7V0H7v7H0v4h7v7h4v-7h7z" fill="#666" /></svg>
              </ZoomButton>
              <ZoomRule />
              <ZoomButton>
                <svg width="18" height="18" viewBox="0 0 18 18"><path d="M0 7h18v4H0z" fill="#666" /></svg>
              </ZoomButton>
            </ZoomControl>
            <SatThumb><Satellite /></SatThumb>
            <Attribution>
              <AttrItem $width={99}>Keyboard shortcuts</AttrItem>
              <AttrItem $width={86}>Map data ©2023</AttrItem>
              <AttrItem $width={72}>Terms of Use</AttrItem>
              <span>Report a map error</span>
            </Attribution>
          </MapFrame>
        </MapCard>
      </main>

      <Footer>
        <FooterGrid>
          <div>
            <FooterBrand>
              <Logo width={45} pathId="foot-logo" />
              <FooterBrandName>KPU KOTA BOGOR</FooterBrandName>
            </FooterBrand>
            <FooterText>Dibuat tujuan website ini adalah untuk menyimpan dan melihat data arsip hasil pilpres setiap tahunnya.</FooterText>
          </div>
          <div>
            <ColTitle>ALAMAT</ColTitle>
            <AddressBlock>
              <PinIcon $gap={28}><FaMapMarkerAlt /></PinIcon>
              Jl. Senam No.12, RT.02/RW.05, Tanah Sareal, Kec. Tanah Sereal, Kota Bogor, Jawa Barat 16161
            </AddressBlock>
            <AddressBlock>
              <ContactIcon $gap={32}><FaPhoneAlt /></ContactIcon>
              (0251) 8362669
            </AddressBlock>
          </div>
          <div>
            <ColTitle>PENGUNJUNG</ColTitle>
            <VisitorBadge>Total pengunjung :<VisitorCount>648</VisitorCount></VisitorBadge>
            <FollowTitle>FOLLOW AKUN KAMI:</FollowTitle>
            <SocialRow>
              <SocialCircle><BiLogoTwitter /></SocialCircle>
              <SocialCircle><BiLogoFacebook /></SocialCircle>
              <SocialCircle><BiLogoYoutube /></SocialCircle>
              <SocialCircle><BiLogoInstagram /></SocialCircle>
            </SocialRow>
          </div>
        </FooterGrid>
        <CopyBar>Copyright © 2023 KPU Kota Bogor All Right Reserved.</CopyBar>
      </Footer>
    </Page>
  );
}
